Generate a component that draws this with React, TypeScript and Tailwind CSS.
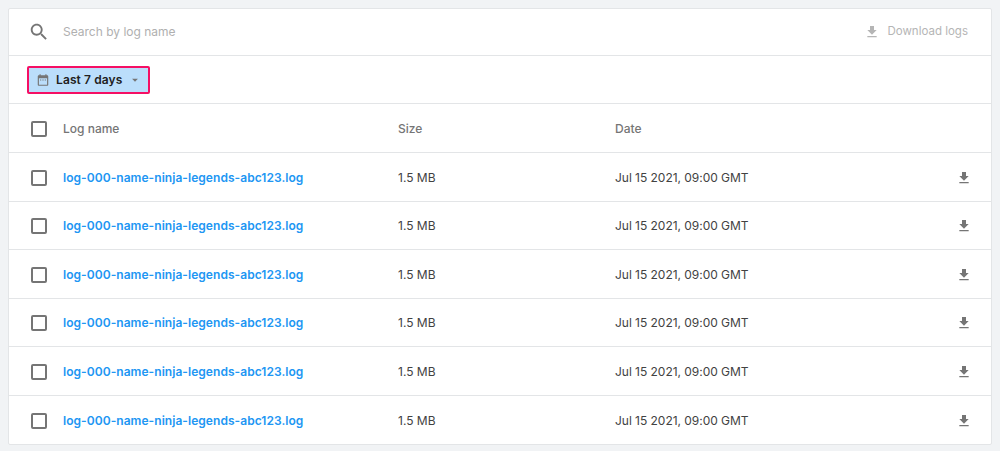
import React from 'react';

function DownloadIcon({ className }: { className: string }) {
  return (
    <svg viewBox="0 0 24 24" fill="currentColor" className={className}>
      <path d="M19 9h-4V3H9v6H5l7 7 7-7zM5 18v2h14v-2H5z" />
    </svg>
  );
}

function CheckBox() {
  return <div className="w-3 h-3 box-content border-2 border-[#757575] rounded-[2px] shrink-0" />;
}

const rows = [0, 1, 2, 3, 4, 5];

export default function App() {
  return (
    <div className="w-[1000px] h-[451px] bg-[#f1f3f5] p-2 overflow-hidden font-['Inter',sans-serif] text-[12px] text-[#424242]">
      <div className="bg-white border border-[#e3e5e7] rounded-[2px] h-[436.5px] flex flex-col">
        {/* search */}
        <div className="h-[47px] shrink-0 border-b border-[#e3e5e7] flex items-center pl-[19px] pr-[23px]">
          <svg viewBox="0 0 24 24" fill="currentColor" className="w-[22px] h-[22px] text-[#757575] shrink-0">
            <path d="M15.5 14h-.79l-.28-.27C15.41 12.59 16 11.11 16 9.5 16 5.91 13.09 3 9.5 3S3 5.91 3 9.5 5.91 16 9.5 16c1.61 0 3.09-.59 4.23-1.57l.27.28v.79l5 4.99L20.49 19l-4.99-5zm-6 0C7.01 14 5 11.99 5 9.5S7.01 5 9.5 5 14 7.01 14 9.5 11.99 14 9.5 14z" />
          </svg>
          <span className="ml-[13px] text-[#b0b0b0]">Search by log name</span>
          <div className="ml-auto flex items-center text-[#b5b5b5] text-[11.5px] font-normal">
            <DownloadIcon className="w-4 h-4 mr-[7px]" />
            <span>Download logs</span>
          </div>
        </div>

        {/* filter */}
        <div className="h-[48px] pt-[1px] shrink-0 border-b border-[#e3e5e7] flex items-center pl-[18px]">
          <div className="w-[123px] h-[28px] bg-[#bbdefb] border-2 border-[#f50f64] rounded-[2px] flex items-center pl-[7px] text-[#212121] font-semibold tracking-[0.1px]">
            <svg viewBox="0 0 24 24" fill="currentColor" className="w-[14px] h-[14px] text-[#757575] shrink-0">
              <path d="M19 4h-1V2h-2v2H8V2H6v2H5c-1.1 0-2 .9-2 2v14c0 1.1.9 2 2 2h14c1.1 0 2-.9 2-2V6c0-1.1-.9-2-2-2zm0 16H5V9h14v11zM7 11h2v2H7zm4 0h2v2h-2zm4 0h2v2h-2z" />
            </svg>
            <span className="ml-[6px]">Last 7 days</span>
            <svg viewBox="0 0 24 24" fill="currentColor" className="w-[14px] h-[14px] ml-[6px] text-[#757575]">
              <path d="M7 10l5 5 5-5z" />
            </svg>
          </div>
        </div>

        {/* table head */}
        <div className="h-[49px] pt-[2px] shrink-0 border-b border-[#e3e5e7] flex items-center pl-[22px] text-[#757575] font-medium">
          <CheckBox />
          <span className="ml-[16px] w-[335px]">Log name</span>
          <span className="w-[217px]">Size</span>
          <span>Date</span>
        </div>

        {rows.map(i => (
          <div key={i} className={`h-[48.5px] pt-[2px] shrink-0 flex items-center pl-[22px] pr-[19px] ${i < 5 ? 'border-b border-[#e3e5e7]' : ''}`}>
            <CheckBox />
            <span className="ml-[16px] w-[335px] text-[#2196f3] font-semibold tracking-[0.05px]">log-000-name-ninja-legends-abc123.log</span>
            <span className="w-[217px]">1.5 MB</span>
            <span className="tracking-[-0.03px]">Jul 15 2021, 09:00 GMT</span>
            <DownloadIcon className="w-4 h-4 ml-auto text-[#757575]" />
          </div>
        ))}
      </div>
    </div>
  );
}
